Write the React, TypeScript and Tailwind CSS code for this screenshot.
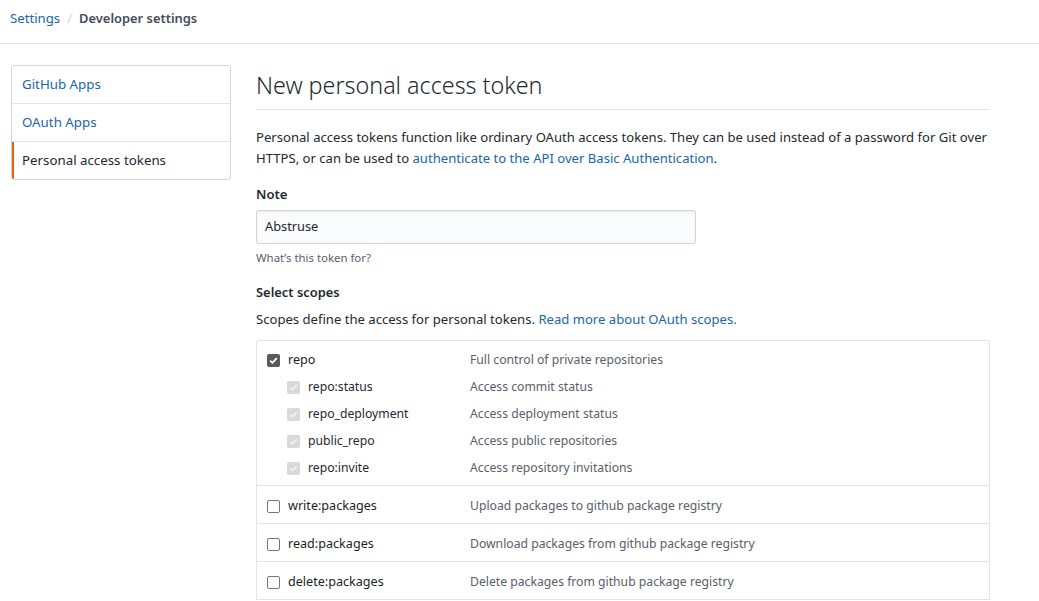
import React from 'react';

const font = { fontFamily: '"Noto Sans", "Open Sans", sans-serif' };

type BoxKind = 'checked' | 'disabled' | 'empty';

const Box = ({ kind }: { kind: BoxKind }) => {
  if (kind === 'empty') {
    return <span className="block w-[13px] h-[13px] rounded-[2px] border border-[#767676] bg-white" />;
  }
  const bg = kind === 'checked' ? 'bg-[#5a5a5a]' : 'bg-[#d9d9d9]';
  const stroke = kind === 'checked' ? '#ffffff' : '#f2f2f2';
  return (
    <span className={`flex w-[13px] h-[13px] rounded-[2px] items-center justify-center ${bg}`}>
      <svg width="11" height="11" viewBox="0 0 11 11">
        <path d="M2.2 5.6 L4.4 7.8 L8.8 3.2" fill="none" stroke={stroke} strokeWidth="1.8" />
      </svg>
    </span>
  );
};

const subScopes = [
  ['repo:status', 'Access commit status'],
  ['repo_deployment', 'Access deployment status'],
  ['public_repo', 'Access public repositories'],
  ['repo:invite', 'Access repository invitations'],
];

const pkgScopes = [
  ['write:packages', 'Upload packages to github package registry'],
  ['read:packages', 'Download packages from github package registry'],
  ['delete:packages', 'Delete packages from github package registry'],
];

export default function App() {
  return (
    <div className="min-h-screen bg-white text-[#24292e] text-[13.1px]" style={font}>
      {/* Breadcrumb */}
      <div className="h-[44px] border-b border-[#e1e4e8] flex items-center px-[10px] pb-[6px] text-[13.2px]">
        <a className="text-[#1a65ad]">Settings</a>
        <span className="mx-[7px] text-[#d1d5da]">/</span>
        <span className="font-semibold text-[#444d56] text-[12.9px]">Developer settings</span>
      </div>

      <div className="flex pl-[11px] pt-[21px] gap-[25px]">
        {/* Sidebar */}
        <nav className="w-[220px] shrink-0 self-start border border-[#d1d5da] rounded-[3px] overflow-hidden text-[13.3px]">
          <a className="flex h-[38px] items-center px-[10px] text-[#1a65ad] border-b border-[#e1e4e8]">GitHub Apps</a>
          <a className="flex h-[38px] items-center px-[10px] text-[#1a65ad] border-b border-[#e1e4e8]">OAuth Apps</a>
          <a className="flex h-[37px] items-center pl-[8px] pr-[10px] text-[#24292e] border-l-2 border-[#e36209]">Personal access tokens</a>
        </nav>

        {/* Main */}
        <main className="w-[734px]">
          <div className="border-b border-[#e1e4e8] pb-[6px]">
            <h1 className="text-[23.3px] font-light leading-[35px] text-[#24292e] pt-[3px]">New personal access token</h1>
          </div>

          <p className="mt-[17px] leading-[21px] text-[#24292e]">
            Personal access tokens function like ordinary OAuth access tokens. They can be used instead of a password for Git over
            <br />
            HTTPS, or can be used to{' '}
            <a className="text-[#1a65ad]">authenticate to the API over Basic Authentication</a>.
          </p>

          <div className="mt-[15px] font-semibold leading-[21px]">Note</div>
          <div className="mt-[5px] w-[440px] h-[34px] rounded-[3px] border border-[#d1d5da] bg-[#fafbfc] flex items-center px-[8px] text-[12.8px] shadow-[inset_0_1px_2px_rgba(27,31,35,0.075)]">
            Abstruse
          </div>
          <div className="mt-[5px] text-[11.4px] text-[#586069] leading-[18px]">What’s this token for?</div>

          <div className="mt-[15px] font-semibold leading-[21px] text-[12.9px]">Select scopes</div>
          <p className="mt-[6px] leading-[21px]">
            Scopes define the access for personal tokens. <a className="text-[#1a65ad]">Read more about OAuth scopes.</a>
          </p>

          <div className="mt-[10px] border border-[#e1e4e8] rounded-t-[3px] border-b-0 text-[12.2px]">
            {/* repo group */}
            <div className="border-b border-[#e1e4e8] pt-[6px] pb-[3px]">
              <div className="flex items-center h-[27px]">
                <span className="w-[31px] pl-[10px]"><Box kind="checked" /></span>
                <span className="w-[182px] text-[12.6px] text-[#1b1f23]">repo</span>
                <span className="text-[#586069]">Full control of private repositories</span>
              </div>
              {subScopes.map(([name, desc]) => (
                <div key={name} className="flex items-center h-[27px]">
                  <span className="w-[51px] pl-[30px]"><Box kind="disabled" /></span>
                  <span className="w-[162px]">{name}</span>
                  <span className="text-[#586069]">{desc}</span>
                </div>
              ))}
            </div>
            {pkgScopes.map(([name, desc]) => (
              <div key={name} className="flex items-center h-[38px] pt-[3px] border-b border-[#e1e4e8]">
                <span className="w-[31px] pl-[10px]"><Box kind="empty" /></span>
                <span className="w-[182px] text-[12.6px] text-[#1b1f23]">{name}</span>
                <span className="text-[#586069]">{desc}</span>
              </div>
            ))}
          </div>
        </main>
      </div>
    </div>
  );
}
